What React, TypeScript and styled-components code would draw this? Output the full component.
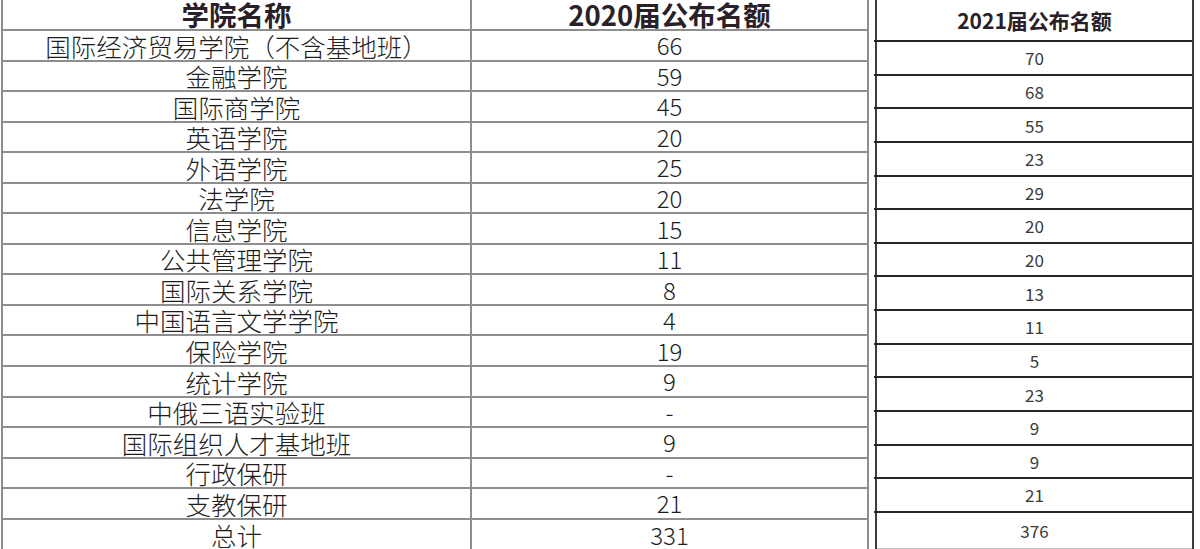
import React from "react";
import styled, { createGlobalStyle } from "styled-components";

const GlobalStyle = createGlobalStyle`
  html, body {
    margin: 0;
    padding: 0;
    background: #ffffff;
  }
  body {
    font-family: "Noto Sans CJK SC", "Noto Sans", sans-serif;
  }
`;

const Page = styled.div`
  display: flex;
  align-items: flex-start;
  gap: 6px;
  padding-left: 1px;
  height: 549px;
  width: 1200px;
  overflow: hidden;
  box-sizing: border-box;
`;

const LeftTable = styled.div`
  display: grid;
  grid-template-columns: 469px 397px;
  grid-template-rows: 31px repeat(16, 30.56px) 32px;
  border-left: 2px solid #8e8e8e;
`;

const LeftCell = styled.div<{ $head?: boolean; $name?: boolean }>`
  box-sizing: border-box;
  border-right: 2px solid #8e8e8e;
  border-bottom: 2px solid #8e8e8e;
  display: flex;
  align-items: center;
  justify-content: center;
  white-space: nowrap;
  overflow: visible;
  color: ${(p) => (p.$head ? "#2a2128" : "#1e1e1e")};
  font-size: ${(p) => (p.$head ? "27.5px" : p.$name ? "25.5px" : "24px")};
  font-weight: ${(p) => (p.$head ? 700 : 300)};
  line-height: 1;
  padding-top: ${(p) => (p.$head ? "1px" : "0")};
`;

const RightTable = styled.div`
  display: flex;
  flex-direction: column;
  width: 319px;
  height: 549px;
  box-sizing: border-box;
  border-left: 2px solid #3c3c3c;
  border-right: 2px solid #3c3c3c;
`;

const RightCell = styled.div<{ $head?: boolean; $last?: boolean; $h: number }>`
  box-sizing: border-box;
  height: ${(p) => p.$h}px;
  margin-left: ${(p) => (p.$last ? "0" : "-3px")};
  border-bottom: ${(p) => (p.$last ? "1px solid #c4c4c4" : "2px solid #262626")};
  display: flex;
  align-items: center;
  justify-content: center;
  padding-left: ${(p) => (p.$last ? "0" : "3px")};
  color: ${(p) => (p.$head ? "#2a2128" : "#3a3a3a")};
  font-size: ${(p) => (p.$head ? "21px" : "17px")};
  font-weight: ${(p) => (p.$head ? 700 : 400)};
  line-height: 1;
`;

const rows2020: [string, string][] = [
  ["国际经济贸易学院（不含基地班）", "66"],
  ["金融学院", "59"],
  ["国际商学院", "45"],
  ["英语学院", "20"],
  ["外语学院", "25"],
  ["法学院", "20"],
  ["信息学院", "15"],
  ["公共管理学院", "11"],
  ["国际关系学院", "8"],
  ["中国语言文学学院", "4"],
  ["保险学院", "19"],
  ["统计学院", "9"],
  ["中俄三语实验班", "-"],
  ["国际组织人才基地班", "9"],
  ["行政保研", "-"],
  ["支教保研", "21"],
  ["总计", "331"],
];

const values2021 = ["70", "68", "55", "23", "29", "20", "20", "13", "11", "5", "23", "9", "9", "21"];

export default function App() {
  return (
    <>
      <GlobalStyle />
      <Page>
        <LeftTable>
          <LeftCell $head>学院名称</LeftCell>
          <LeftCell $head>2020届公布名额</LeftCell>
          {rows2020.map(([name, n]) => (
            <React.Fragment key={name}>
              <LeftCell $name>{name}</LeftCell>
              <LeftCell>{n}</LeftCell>
            </React.Fragment>
          ))}
        </LeftTable>
        <RightTable>
          <RightCell $head $h={42}>2021届公布名额</RightCell>
          {values2021.map((v, i) => (
            <RightCell key={i} $h={33.64}>{v}</RightCell>
          ))}
          <RightCell $last $h={36}>376</RightCell>
        </RightTable>
      </Page>
    </>
  );
}
